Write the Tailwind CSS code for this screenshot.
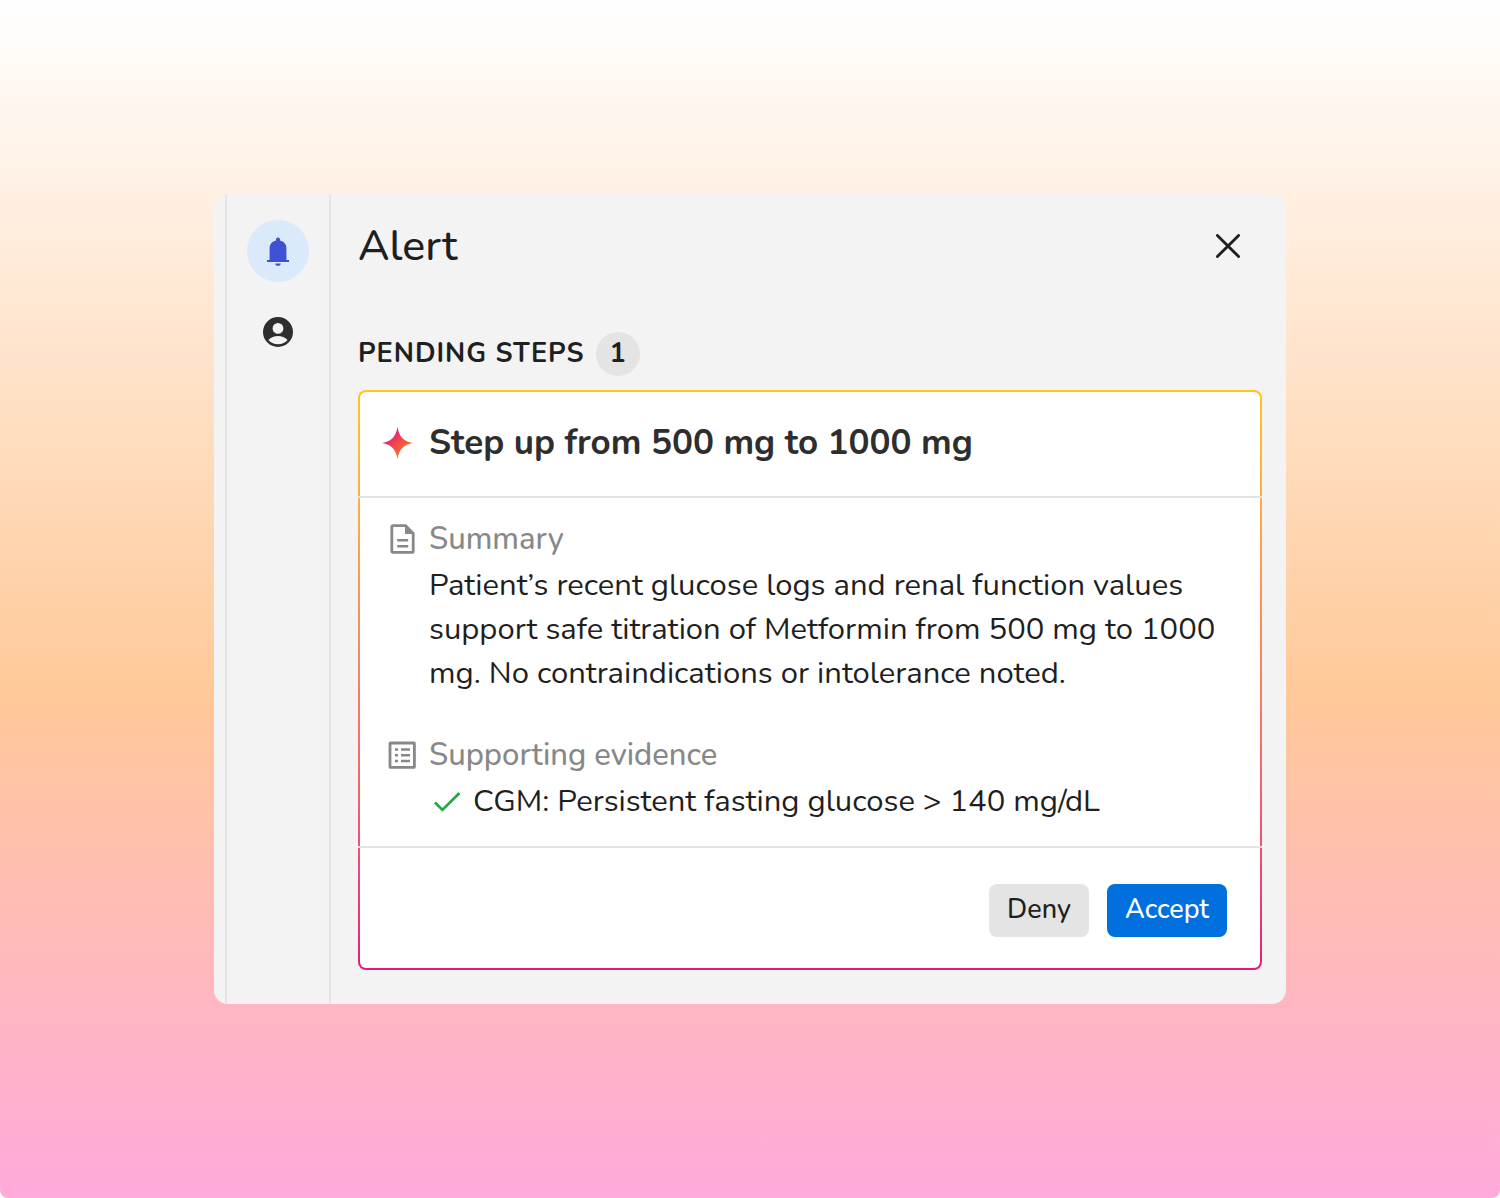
<!DOCTYPE html>
<html lang="en">
<head>
<meta charset="utf-8">
<meta name="viewport" content="width=device-width, initial-scale=1">
<title>Alert</title>
<script src="https://cdn.jsdelivr.net/npm/@tailwindcss/browser@4"></script>
</head>
<body class="bg-white font-['Nunito','Lato',sans-serif] text-[#1f1f1f]">
<div class="flex min-h-screen items-center justify-center rounded-b-lg bg-[linear-gradient(180deg,#ffffff_0%,#ffc999_58%,#ffaadb_100%)] p-6">
  <div class="flex w-full max-w-[1072px] overflow-hidden rounded-[14px] bg-[#f3f3f3] pl-[11px]">
    <nav aria-label="Panels" class="flex w-[106px] shrink-0 flex-col items-center gap-[35px] border-x-2 border-[#e6e6e6] pt-[26px]">
      <button type="button" aria-label="Alerts" class="flex size-[62px] items-center justify-center rounded-full bg-[#dbeafa]">
        <svg class="h-[30px] w-6" viewBox="0 0 24 30" fill="#3f51d4"><path d="M1 24h2.600V12.500c0-4.300 2.400-7.100 6.400-7.900V3.400a2 2 0 0 1 4 0v1.200c4 .8 6.400 3.600 6.400 7.900V24H23v1.900H1zM9.300 27.400h5.400a2.700 2.400 0 0 1-5.400 0z"/></svg>
      </button>
      <button type="button" aria-label="Profile">
        <svg class="size-[30px]" viewBox="2 2 20 20" fill="#2e2e2e"><path d="M12 2a10 10 0 1 0 0 20 10 10 0 0 0 0-20zm0 4a3.600 3.600 0 1 1 0 7.200A3.600 3.600 0 0 1 12 6zM5.600 17.300C7.200 15.500 9.700 14.700 12 14.700s4.800.8 6.400 2.600C17 19 14.800 20.100 12 20.100S7 19 5.600 17.300z"/></svg>
      </button>
    </nav>
    <main class="min-w-0 flex-1 pt-6 pr-6 pb-[34px] pl-[27px]">
      <header class="flex items-center justify-between pr-5">
        <h1 class="text-[43px] leading-[56px] font-medium">Alert</h1>
        <button type="button" aria-label="Close" class="p-0.5">
          <svg class="size-6" viewBox="0 0 24 24" fill="none" stroke="#1f1f1f" stroke-width="2.800" stroke-linecap="round"><path d="M1.400 1.400l21.200 21.200M22.600 1.400L1.400 22.600"/></svg>
        </button>
      </header>
      <div class="mt-[58px] flex items-center gap-[11px]">
        <h2 class="text-[27px] leading-[44px] font-bold tracking-[1px]">PENDING STEPS</h2>
        <span class="flex size-[44px] items-center justify-center rounded-full bg-[#e4e4e4] text-[27px] font-bold">1</span>
      </div>
      <article class="mt-[14px] rounded-lg bg-linear-to-b from-[#ffc61a] to-[#e5177b] p-0.5">
        <div class="rounded-md bg-white">
          <div class="flex items-center gap-[15px] px-[22px] pt-6 pb-[26px]">
            <svg class="size-8 shrink-0" viewBox="0 0 32 32"><defs><linearGradient id="spark" x1="8" y1="8" x2="24" y2="24" gradientUnits="userSpaceOnUse"><stop offset="0" stop-color="#e91e78"/><stop offset="1" stop-color="#f9741c"/></linearGradient></defs><path fill="url(#spark)" d="M15.500 0C17 9.500 21.500 14.500 31 16C21.500 17.500 17 22.500 15.500 32C14 22.500 9.500 17.500 0 16C9.500 14.500 14 9.500 15.500 0z"/></svg>
            <h3 class="text-[35px] leading-[54px] font-bold text-[#2e2e2e]">Step up from 500 mg to 1000 mg</h3>
          </div>
          <div class="-mx-0.5 border-y-2 border-[#e4e4e4] pt-[19px] pr-8 pb-[23px] pl-[30px]">
            <section>
              <div class="flex items-center gap-[13px] text-[#888]">
                <svg class="size-7 shrink-0 overflow-visible" viewBox="0 0 28 28"><path fill="none" stroke="currentColor" stroke-width="2.800" stroke-linejoin="round" d="M5 .6H17.500L25.200 8.400V26.200a1.200 1.200 0 0 1-1.200 1.200H5a1.200 1.200 0 0 1-1.200-1.200V1.800A1.200 1.200 0 0 1 5 .6z"/><path fill="currentColor" d="M17 0l9 9h-9zM9.200 14h11v2.500h-11zM9.200 20h11v2.500h-11z"/></svg>
                <h4 class="text-[31px] leading-[44px] font-medium">Summary</h4>
              </div>
              <p class="mt-0.5 pl-[41px] text-[31px] leading-[44px]">Patient’s recent glucose logs and renal function values support safe titration of Metformin from 500 mg to 1000 mg. No contraindications or intolerance noted.</p>
            </section>
            <section class="mt-[38px]">
              <div class="flex items-center gap-[13px] text-[#888]">
                <svg class="size-7 shrink-0" viewBox="0 0 28 28"><rect x="2" y="2" width="24.400" height="24.400" rx=".5" fill="none" stroke="currentColor" stroke-width="2.800"/><path fill="currentColor" d="M7 7.200h3v2.500H7zM13 7.200h9v2.500h-9zM7 13h3v2.500H7zM13 13h9v2.500h-9zM7 18.800h3v2.500H7zM13 18.800h9v2.500h-9z"/></svg>
                <h4 class="text-[31px] leading-[44px] font-medium">Supporting evidence</h4>
              </div>
              <ul class="mt-0.5 pl-[45px]">
                <li class="flex items-center gap-3 text-[31px] leading-[44px]">
                  <svg class="size-7 shrink-0" viewBox="0 0 28 28" fill="none" stroke="#28a745" stroke-width="2.800"><path d="M2 15.500l7.400 7.400L26.500 6"/></svg>
                  CGM: Persistent fasting glucose &gt; 140 mg/dL
                </li>
              </ul>
            </section>
          </div>
          <div class="flex justify-end gap-[18px] px-[33px] pt-9 pb-[31px]">
            <button type="button" class="h-[53px] w-[100px] rounded-lg bg-[#e4e4e4] text-[27px] font-medium">Deny</button>
            <button type="button" class="h-[53px] w-[120px] rounded-lg bg-[#0070de] text-[27px] font-medium text-white">Accept</button>
          </div>
        </div>
      </article>
    </main>
  </div>
</div>
</body>
</html>
